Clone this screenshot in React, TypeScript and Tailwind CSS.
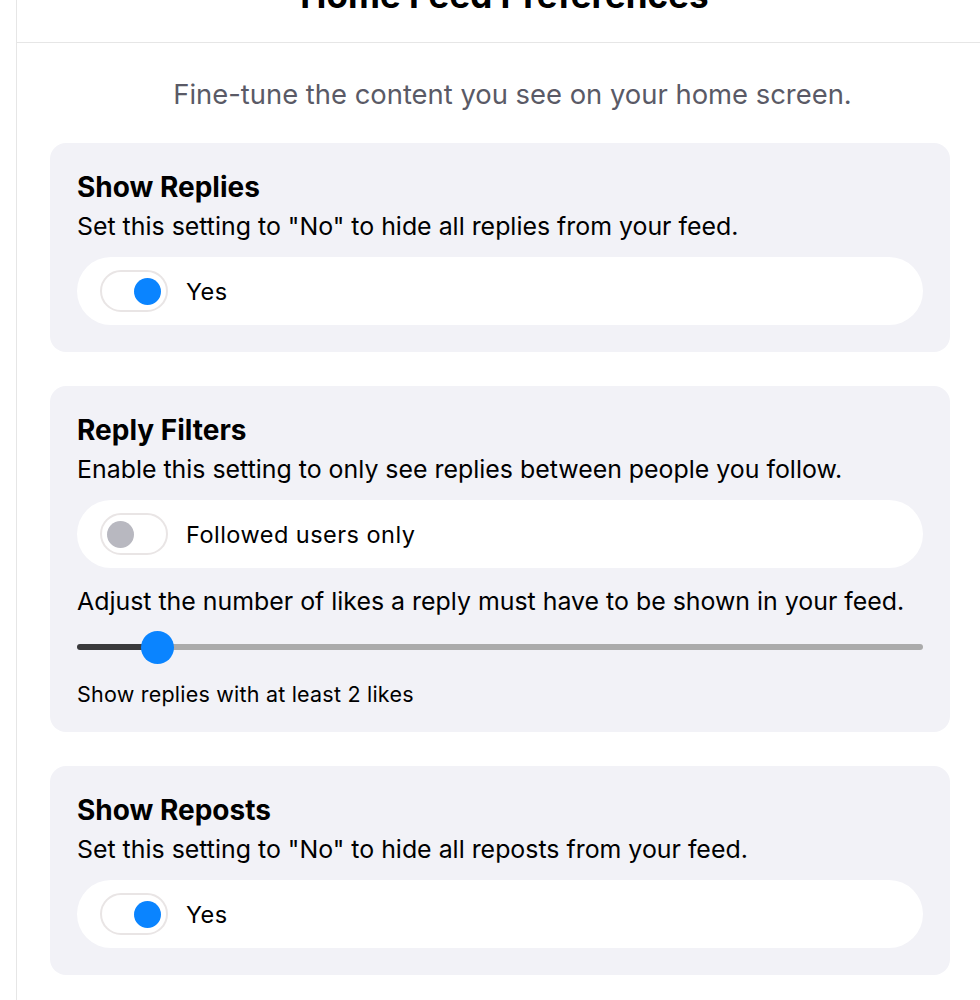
import React from "react";

const font = { fontFamily: "Inter, 'Noto Sans', sans-serif" };

function Toggle({ on }: { on: boolean }) {
  return (
    <div className="w-[68px] h-[42px] rounded-full border-2 border-[#e9e5e5] bg-white flex items-center px-[5px] shrink-0">
      <div
        className={
          on
            ? "ml-auto w-[27px] h-[27px] rounded-full bg-[#0a84ff]"
            : "w-[27px] h-[27px] rounded-full bg-[#b8b8c0]"
        }
      />
    </div>
  );
}

function ToggleRow({ on, label }: { on: boolean; label: string }) {
  return (
    <div className="mt-[16px] h-[68px] rounded-full bg-white flex items-center pl-[23px] gap-[18px]">
      <Toggle on={on} />
      <span className="text-[23.5px] leading-[30px] pt-[2px] text-black tracking-[0.02em]">{label}</span>
    </div>
  );
}

function CardHead({ title, desc }: { title: string; desc: string }) {
  return (
    <>
      <div className="text-[28px] leading-[34px] font-bold text-black">{title}</div>
      <div className="mt-[7px] text-[24.9px] leading-[30px] text-black">{desc}</div>
    </>
  );
}

export default function App() {
  return (
    <div className="w-[980px] h-[1000px] bg-white overflow-hidden" style={font}>
      <div className="ml-[16px] h-full border-l border-[#e6e6e6] flex flex-col">
        <div className="h-[43px] border-b border-[#e6e6e6] overflow-hidden relative">
          <div className="absolute left-0 right-0 top-[-26px] text-center text-[35px] leading-[42px] font-bold text-black pl-[12px]">
            Home Feed Preferences
          </div>
        </div>
        <div className="mt-[34px] text-center text-[27.4px] leading-[34px] text-[#5a5a66] pl-[28px]">
          Fine-tune the content you see on your home screen.
        </div>
        <div className="ml-[33px] w-[900px] mt-[32px] flex flex-col gap-[34px]">
          <div className="rounded-[16px] bg-[#f2f2f7] px-[27px] pt-[27px] pb-[27px]">
            <CardHead title="Show Replies" desc={'Set this setting to "No" to hide all replies from your feed.'} />
            <ToggleRow on={true} label="Yes" />
          </div>
          <div className="rounded-[16px] bg-[#f2f2f7] px-[27px] pt-[27px] pb-[25px]">
            <CardHead title="Reply Filters" desc="Enable this setting to only see replies between people you follow." />
            <ToggleRow on={false} label="Followed users only" />
            <div className="mt-[18px] text-[24.9px] leading-[30px] text-black whitespace-nowrap">
              Adjust the number of likes a reply must have to be shown in your feed.
            </div>
            <div className="mt-[14px] h-[34px] flex items-center">
              <div className="w-[80px] h-[6px] rounded-l-full bg-[#3a3a3c]" />
              <div className="w-[33px] h-[33px] rounded-full bg-[#0a84ff] -mx-[16px] relative z-10 shrink-0" />
              <div className="flex-1 h-[6px] rounded-r-full bg-[#ababab]" />
            </div>
            <div className="mt-[17px] text-[21.5px] leading-[26px] text-black tracking-[0.01em]">
              Show replies with at least 2 likes
            </div>
          </div>
          <div className="rounded-[16px] bg-[#f2f2f7] px-[27px] pt-[27px] pb-[27px]">
            <CardHead title="Show Reposts" desc={'Set this setting to "No" to hide all reposts from your feed.'} />
            <ToggleRow on={true} label="Yes" />
          </div>
        </div>
      </div>
    </div>
  );
}
